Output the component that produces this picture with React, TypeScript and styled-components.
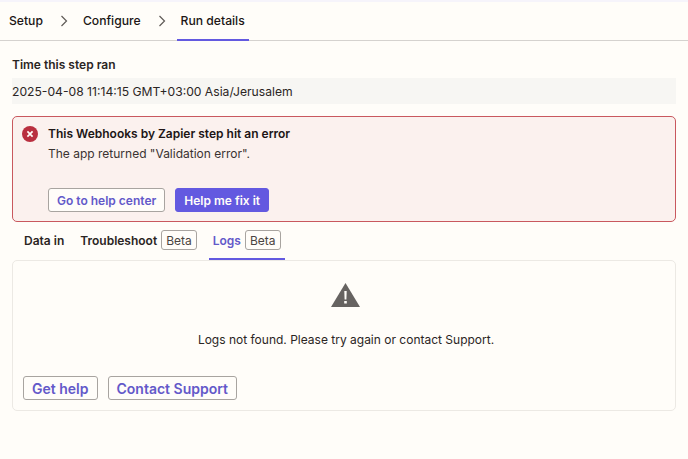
import React from "react";
import styled, { createGlobalStyle } from "styled-components";

const Global = createGlobalStyle`
  html, body { margin: 0; padding: 0; background: #fffdf9; }
  body { font-family: Inter, "Liberation Sans", sans-serif; color: #201515; }
  * { box-sizing: border-box; }
`;

const Page = styled.div`
  width: 688px;
  height: 459px;
  overflow: hidden;
  background: #fffdf9;
  display: flex;
  flex-direction: column;
`;

const TopStrip = styled.div`
  height: 2px;
  background: #f6f4fb;
`;

const StepNav = styled.nav`
  height: 39px;
  display: flex;
  align-items: stretch;
  padding-left: 9px;
  border-bottom: 1px solid #d5d2cf;
  flex: none;
`;

const StepItem = styled.div<{ $active?: boolean }>`
  display: flex;
  align-items: center;
  font-size: 12.15px;
  font-weight: 500;
  padding: ${(p) => (p.$active ? "0 4px" : "0")};
  margin-left: ${(p) => (p.$active ? "-4px" : "0")};
  margin-bottom: -1px;
  border-bottom: 2px solid ${(p) => (p.$active ? "#6359e0" : "transparent")};
`;

const Chevron = styled.svg`
  width: 8px;
  height: 12px;
  margin: 0 15px 0 17px;
  align-self: center;
  fill: none;
  stroke: #5f5a57;
  stroke-width: 1.2;
`;

const Content = styled.main`
  padding: 0 12px;
  display: flex;
  flex-direction: column;
`;

const FieldLabel = styled.div`
  margin-top: 16px;
  font-size: 12px;
  font-weight: 600;
  line-height: 16px;
  color: #2b2524;
`;

const FieldValue = styled.div`
  margin-top: 5px;
  height: 26px;
  display: flex;
  align-items: center;
  background: #f7f6f3;
  font-size: 12.15px;
  color: #2b2524;
`;

const Alert = styled.section`
  margin-top: 12px;
  height: 106px;
  border: 1px solid #c9585e;
  border-radius: 5px;
  background: #fbf1ee;
  display: flex;
  padding: 9px;
  gap: 10px;
`;

const ErrorIcon = styled.svg`
  flex: none;
`;

const AlertBody = styled.div`
  display: flex;
  flex-direction: column;
`;

const AlertTitle = styled.div`
  font-size: 12px;
  font-weight: 600;
  line-height: 16px;
`;

const AlertText = styled.div`
  margin-top: 4px;
  font-size: 12px;
  line-height: 16px;
  color: #3a3331;
`;

const AlertActions = styled.div`
  display: flex;
  gap: 10px;
  margin-top: 26px;
`;

const Button = styled.button<{ $primary?: boolean; $large?: boolean }>`
  height: 24px;
  padding: 0 8px;
  font-family: inherit;
  font-size: ${(p) => (p.$large ? 14 : 12)}px;
  font-weight: 600;
  border-radius: 3px;
  border: 1px solid ${(p) => (p.$primary ? "#6359e0" : "#a8a4a0")};
  background: ${(p) => (p.$primary ? "#6359e0" : "#fffdf9")};
  color: ${(p) => (p.$primary ? "#fffdf9" : "#6359c9")};
`;

const Tabs = styled.div`
  display: flex;
  height: 38px;
  padding-left: 8px;
  gap: 8px;
`;

const Tab = styled.div<{ $active?: boolean }>`
  display: flex;
  align-items: center;
  gap: 4px;
  padding: 0 4px;
  font-size: 12px;
  font-weight: 600;
  color: ${(p) => (p.$active ? "#6359c9" : "#2b2524")};
  border-bottom: 2px solid ${(p) => (p.$active ? "#6359e0" : "transparent")};
`;

const Badge = styled.span`
  height: 20px;
  padding: 0 4px;
  display: flex;
  align-items: center;
  border: 1px solid #a8a4a0;
  border-radius: 3px;
  font-size: 12px;
  font-weight: 400;
  color: #4a4441;
`;

const LogsPanel = styled.section`
  height: 151px;
  border: 1px solid #ece9e4;
  border-radius: 5px;
  display: flex;
  flex-direction: column;
  align-items: center;
  padding: 22px 10px 10px;
`;

const WarningIcon = styled.svg`
  flex: none;
  margin-left: 3px;
`;

const Message = styled.div`
  margin-top: 25px;
  padding-left: 4px;
  font-size: 12px;
  line-height: 16px;
  color: #2b2524;
`;

const PanelActions = styled.div`
  align-self: stretch;
  margin-top: auto;
  display: flex;
  gap: 10px;
`;

export default function App() {
  return (
    <Page>
      <Global />
      <TopStrip />
      <StepNav>
        <StepItem>Setup</StepItem>
        <Chevron viewBox="0 0 8 12"><path d="M1.5 1 6.5 6 1.5 11" /></Chevron>
        <StepItem>Configure</StepItem>
        <Chevron viewBox="0 0 8 12"><path d="M1.5 1 6.5 6 1.5 11" /></Chevron>
        <StepItem $active>Run details</StepItem>
      </StepNav>
      <Content>
        <FieldLabel>Time this step ran</FieldLabel>
        <FieldValue>2025-04-08 11:14:15 GMT+03:00 Asia/Jerusalem</FieldValue>
        <Alert>
          <ErrorIcon width="16" height="16" viewBox="0 0 16 16">
            <circle cx="8" cy="8" r="8" fill="#b92f3f" />
            <path d="M5.4 5.4 10.6 10.6M10.6 5.4 5.4 10.6" stroke="#fffdf9" strokeWidth="1.7" />
          </ErrorIcon>
          <AlertBody>
            <AlertTitle>This Webhooks by Zapier step hit an error</AlertTitle>
            <AlertText>The app returned "Validation error".</AlertText>
            <AlertActions>
              <Button>Go to help center</Button>
              <Button $primary>Help me fix it</Button>
            </AlertActions>
          </AlertBody>
        </Alert>
        <Tabs>
          <Tab>Data in</Tab>
          <Tab>Troubleshoot<Badge>Beta</Badge></Tab>
          <Tab $active>Logs<Badge>Beta</Badge></Tab>
        </Tabs>
        <LogsPanel>
          <WarningIcon width="29" height="24" viewBox="0 0 29 24">
            <path d="M14.5 0 29 24H0Z" fill="#666361" />
            <path d="M13.3 8h2.4l-.3 8.5h-1.8ZM13.2 18h2.6v2.6h-2.6Z" fill="#fffdf9" />
          </WarningIcon>
          <Message>Logs not found. Please try again or contact Support.</Message>
          <PanelActions>
            <Button $large>Get help</Button>
            <Button $large>Contact Support</Button>
          </PanelActions>
        </LogsPanel>
      </Content>
    </Page>
  );
}
